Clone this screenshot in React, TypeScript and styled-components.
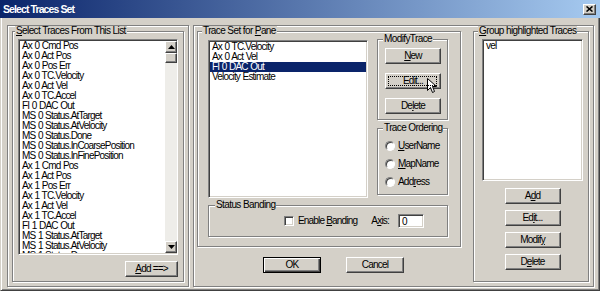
import React from "react";
import styled, { createGlobalStyle, css } from "styled-components";

const GlobalStyle = createGlobalStyle`
  html, body {
    margin: 0;
    padding: 0;
  }
  body {
    background: #d4d0c8;
    font-family: "Liberation Sans Narrow", "Arial Narrow", "Liberation Sans", Arial, sans-serif;
    font-size: 10px;
    line-height: 10px;
    letter-spacing: -0.8px;
    color: #000;
  }
  * {
    box-sizing: border-box;
  }
`;

const raised = css`
  border: 1px solid;
  border-color: #fff #404040 #404040 #fff;
  box-shadow: inset -1px -1px #808080;
`;

const sunken = css`
  border: 1px solid;
  border-color: #808080 #fff #fff #808080;
  box-shadow: inset 1px 1px #404040, inset -1px -1px #d4d0c8;
`;

const etched = css`
  border: 1px solid #808080;
  box-shadow: inset 1px 1px #fff, 1px 1px #fff;
`;

const Window = styled.div`
  width: 600px;
  height: 291px;
  display: flex;
  flex-direction: column;
  background: #d4d0c8;
  overflow: hidden;
`;

const TitleBar = styled.div`
  height: 18px;
  flex: none;
  display: flex;
  align-items: center;
  justify-content: space-between;
  padding: 0 4px 0 3px;
  background: linear-gradient(90deg, #0a246a 0%, #a6caf0 100%);
  color: #fff;
  font-weight: bold;
  font-size: 10.5px;
  letter-spacing: -0.9px;
`;

const CloseButton = styled.div`
  ${raised};
  width: 13px;
  height: 11px;
  background: #d4d0c8;
  display: flex;
  align-items: center;
  justify-content: center;
`;

const Frame = styled.div`
  flex: 1;
  display: flex;
  gap: 4px;
  padding: 7px 5px 3px 6px;
  border-style: solid;
  border-width: 0 1px 1px 1px;
  border-color: #d4d0c8 #404040 #404040 #d4d0c8;
  box-shadow: inset 1px 0 #fff, inset -1px -1px #808080;
`;

const Pane = styled.div<{ $w: number }>`
  ${etched};
  width: ${(p) => p.$w}px;
  display: flex;
  padding: 0 4px 4px ${(p) => (p.$w > 200 ? 3 : 4)}px;
  gap: 12px;
`;

const Column = styled.div`
  display: flex;
  flex-direction: column;
`;

const GroupBox = styled.fieldset<{ $pad?: string; $w?: number }>`
  ${etched};
  margin: 0;
  min-width: 0;
  width: ${(p) => (p.$w ? `${p.$w}px` : "auto")};
  padding: ${(p) => p.$pad ?? "0 5px 5px 5px"};
  display: flex;
  flex-direction: column;
`;

const Legend = styled.legend<{ $x?: number }>`
  padding: 0 1px;
  margin-left: ${(p) => p.$x ?? 0}px;
  height: 10px;
  line-height: 10px;
  background: #d4d0c8;
  white-space: nowrap;
  letter-spacing: -0.6px;
`;

const ListBox = styled.div<{ $w: number; $h: number; $top: number }>`
  ${sunken};
  width: ${(p) => p.$w}px;
  height: ${(p) => p.$h}px;
  margin-top: ${(p) => p.$top}px;
  background: #fff;
  padding: 1px 0 1px 1px;
  display: flex;
  overflow: hidden;
  flex: none;
`;

const Items = styled.div`
  flex: 1;
  overflow: hidden;
`;

const Item = styled.div<{ $selected?: boolean }>`
  height: 10px;
  line-height: 10px;
  padding-left: 2px;
  white-space: nowrap;
  word-spacing: 0.5px;
  background: ${(p) => (p.$selected ? "#0a246a" : "transparent")};
  color: ${(p) => (p.$selected ? "#fff" : "#000")};
  margin-right: 1px;
`;

const ScrollBar = styled.div`
  width: 12px;
  display: flex;
  flex-direction: column;
  background: #eeede9;
`;

const ScrollButton = styled.div<{ $h: number }>`
  ${raised};
  height: ${(p) => p.$h}px;
  background: #d4d0c8;
  display: flex;
  align-items: center;
  justify-content: center;
  flex: none;
`;

const Track = styled.div`
  flex: 1;
`;

const Button = styled.div<{ $w?: number; $default?: boolean; $focused?: boolean }>`
  ${raised};
  position: relative;
  width: ${(p) => p.$w ?? 56}px;
  height: 16px;
  flex: none;
  background: #d4d0c8;
  display: flex;
  align-items: center;
  justify-content: center;
  line-height: 10px;
  ${(p) =>
    p.$default &&
    css`
      border: 1px solid #000;
      box-shadow: inset 1px 1px #fff, inset -1px -1px #404040, inset -2px -2px #808080;
    `}
  ${(p) =>
    p.$focused &&
    css`
      &::after {
        content: "";
        position: absolute;
        inset: 2px 3px 2px 2px;
        border: 1px dotted #000;
      }
    `}
`;

const ButtonStack = styled.div<{ $gap: number; $top: number; $align?: string }>`
  display: flex;
  flex-direction: column;
  align-items: ${(p) => p.$align ?? "center"};
  gap: ${(p) => p.$gap}px;
  margin-top: ${(p) => p.$top}px;
`;

const Split = styled.div`
  display: flex;
  gap: 9px;
  align-items: flex-start;
`;

const SideColumn = styled.div`
  display: flex;
  flex-direction: column;
  gap: 3px;
  margin-top: -2px;
`;

const RadioRow = styled.div`
  height: 18px;
  display: flex;
  align-items: center;
  gap: 3px;
`;

const Radio = styled.span`
  width: 10px;
  height: 10px;
  border-radius: 50%;
  background: #fff;
  border: 1px solid;
  border-color: #808080 #fff #fff #808080;
  box-shadow: inset 1px 1px #404040;
`;

const BandRow = styled.div`
  height: 16px;
  display: flex;
  align-items: center;
  justify-content: flex-end;
`;

const CheckBox = styled.span`
  ${sunken};
  width: 10px;
  height: 10px;
  background: #fff;
  margin-right: 4px;
`;

const Label = styled.span<{ $gap?: number }>`
  margin-right: ${(p) => p.$gap ?? 0}px;
`;

const TextInput = styled.div`
  ${sunken};
  width: 26px;
  height: 14px;
  background: #fff;
  padding: 2px 0 0 3px;
`;

const DialogButtons = styled.div`
  display: flex;
  justify-content: center;
  gap: 25px;
  margin-top: 10px;
  padding-left: 9px;
`;

const Cursor = styled.svg`
  position: absolute;
  left: 41px;
  top: 4px;
`;

const leftItems = [
  "Ax 0 Cmd Pos",
  "Ax 0 Act Pos",
  "Ax 0 Pos Err",
  "Ax 0 TC.Velocity",
  "Ax 0 Act Vel",
  "Ax 0 TC.Accel",
  "FI 0 DAC Out",
  "MS 0 Status.AtTarget",
  "MS 0 Status.AtVelocity",
  "MS 0 Status.Done",
  "MS 0 Status.InCoarsePosition",
  "MS 0 Status.InFinePosition",
  "Ax 1 Cmd Pos",
  "Ax 1 Act Pos",
  "Ax 1 Pos Err",
  "Ax 1 TC.Velocity",
  "Ax 1 Act Vel",
  "Ax 1 TC.Accel",
  "FI 1 DAC Out",
  "MS 1 Status.AtTarget",
  "MS 1 Status.AtVelocity",
  "MS 1 Status.Done",
];

const paneItems = ["Ax 0 TC.Velocity", "Ax 0 Act Vel", "FI 0 DAC Out", "Velocity Estimate"];

function Arrow({ up }: { up?: boolean }) {
  return (
    <svg width="7" height="4" viewBox="0 0 7 4">
      <polygon points={up ? "3.5,0 7,4 0,4" : "0,0 7,0 3.5,4"} fill="#000" />
    </svg>
  );
}

export default function App() {
  return (
    <>
      <GlobalStyle />
      <Window>
        <TitleBar>
          <span>Select Traces Set</span>
          <CloseButton>
            <svg width="7" height="6" viewBox="0 0 7 6">
              <path d="M0.5 0.5 L6.5 5.5 M6.5 0.5 L0.5 5.5" stroke="#000" strokeWidth="1.6" />
            </svg>
          </CloseButton>
        </TitleBar>
        <Frame>
          <Pane $w={182}>
            <GroupBox $pad="0 5px 4px 5px" style={{ flex: 1 }}>
              <Legend $x={-3}>
                <u>S</u>elect Traces From This List
              </Legend>
              <ListBox $w={160} $h={216} $top={3}>
                <Items>
                  {leftItems.map((t) => (
                    <Item key={t}>{t}</Item>
                  ))}
                </Items>
                <ScrollBar>
                  <ScrollButton $h={12}>
                    <Arrow up />
                  </ScrollButton>
                  <ScrollButton $h={10} />
                  <Track />
                  <ScrollButton $h={12}>
                    <Arrow />
                  </ScrollButton>
                </ScrollBar>
              </ListBox>
              <ButtonStack $gap={0} $top={6} $align="flex-end">
                <Button $w={53}>
                  <u>A</u>dd ==&gt;
                </Button>
              </ButtonStack>
            </GroupBox>
          </Pane>
          <Pane $w={401}>
            <Column>
              <GroupBox $pad="0 12px 9px 10px" $w={264}>
                <Legend $x={-6}>
                  Trace Set for <u>P</u>ane
                </Legend>
                <Split>
                  <ListBox $w={160} $h={158} $top={4}>
                    <Items>
                      {paneItems.map((t) => (
                        <Item key={t} $selected={t === "FI 0 DAC Out"}>
                          {t}
                        </Item>
                      ))}
                    </Items>
                  </ListBox>
                  <SideColumn>
                    <GroupBox $pad="0 0 5px 7px" $w={71}>
                      <Legend $x={-2}>ModifyTrace</Legend>
                      <ButtonStack $gap={9} $top={4} $align="flex-start">
                        <Button>
                          <u>N</u>ew
                        </Button>
                        <Button $focused>
                          Ed<u>i</u>t...
                          <Cursor width="11" height="16" viewBox="0 0 11 16">
                            <path
                              d="M0.5 0.5 L0.5 12.5 L3.5 9.5 L5.5 14.5 L7.5 13.5 L5.5 8.5 L9.5 8.5 Z"
                              fill="#fff"
                              stroke="#000"
                              strokeWidth="1"
                            />
                          </Cursor>
                        </Button>
                        <Button>
                          De<u>l</u>ete
                        </Button>
                      </ButtonStack>
                    </GroupBox>
                    <GroupBox $pad="4px 0 3px 7px" $w={71}>
                      <Legend $x={-2}>Trace Ordering</Legend>
                      <RadioRow>
                        <Radio />
                        <span>
                          <u>U</u>serName
                        </span>
                      </RadioRow>
                      <RadioRow>
                        <Radio />
                        <span>
                          <u>M</u>apName
                        </span>
                      </RadioRow>
                      <RadioRow>
                        <Radio />
                        <span>
                          Add<u>r</u>ess
                        </span>
                      </RadioRow>
                    </GroupBox>
                  </SideColumn>
                </Split>
                <GroupBox $pad="3px 23px 7px 6px" style={{ marginTop: 2 }}>
                  <Legend>Status Banding</Legend>
                  <BandRow>
                    <CheckBox />
                    <Label $gap={14}>
                      Enable <u>B</u>anding
                    </Label>
                    <Label $gap={9}>
                      A<u>x</u>is:
                    </Label>
                    <TextInput>0</TextInput>
                  </BandRow>
                </GroupBox>
              </GroupBox>
              <DialogButtons>
                <Button $w={58} $default>
                  OK
                </Button>
                <Button $w={58}>Cancel</Button>
              </DialogButtons>
            </Column>
            <GroupBox $pad="0 5px 11px 8px" $w={116}>
              <Legend $x={-4}>
                <u>G</u>roup highlighted Traces
              </Legend>
              <ListBox $w={101} $h={142} $top={3}>
                <Items>
                  <Item>vel</Item>
                </Items>
              </ListBox>
              <ButtonStack $gap={6} $top={7}>
                <Button>
                  A<u>d</u>d
                </Button>
                <Button>
                  Ed<u>i</u>t...
                </Button>
                <Button>
                  Modif<u>y</u>
                </Button>
                <Button>
                  D<u>e</u>lete
                </Button>
              </ButtonStack>
            </GroupBox>
          </Pane>
        </Frame>
      </Window>
    </>
  );
}
